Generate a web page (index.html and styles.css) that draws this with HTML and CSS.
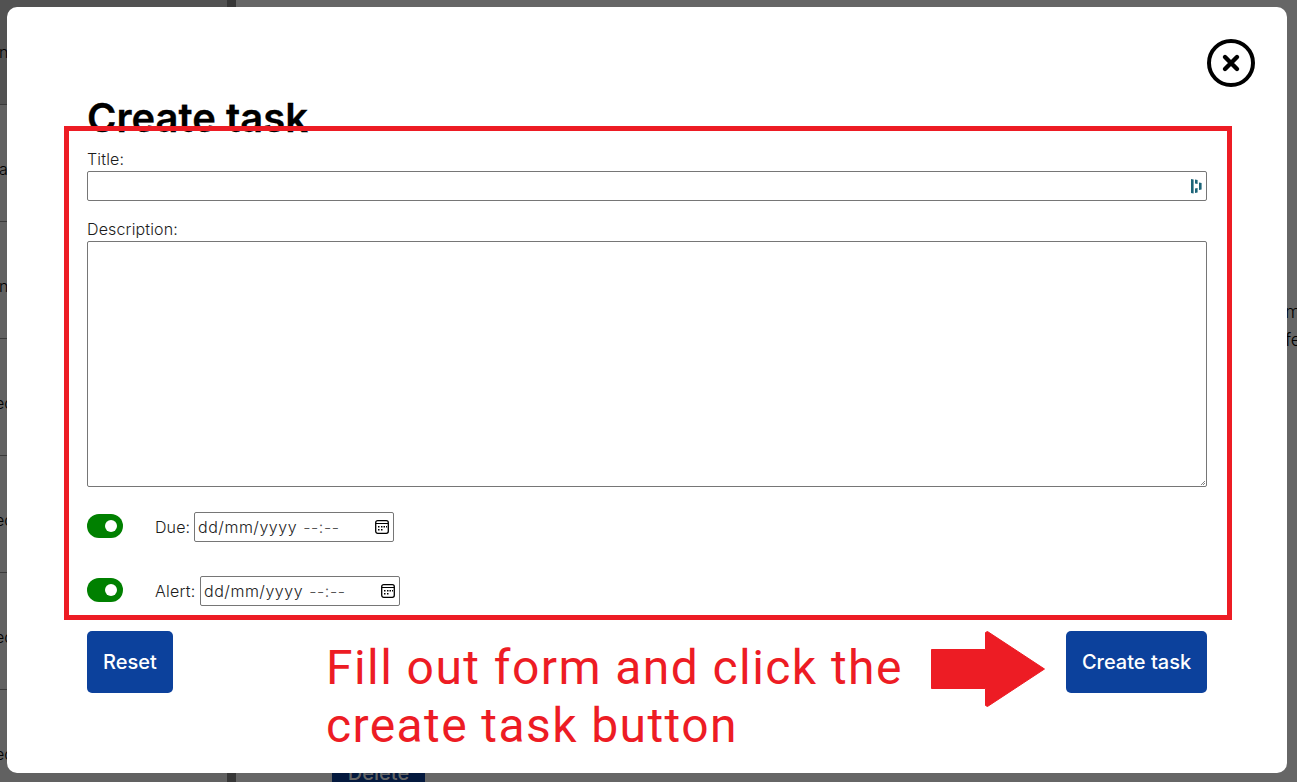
FILE: index.html
```html
<!DOCTYPE html>
<html lang="en">
<head>
<meta charset="utf-8">
<title>Create task</title>
<link rel="stylesheet" href="styles.css">
</head>
<body>
<div class="app">
  <div class="task-list">
    <div class="task selected"><span class="n">n</span></div>
    <div class="task"><span class="a">a</span></div>
    <div class="task"><span class="n">n</span></div>
    <div class="task"><span class="ed">ed</span></div>
    <div class="task"><span class="ed">ed</span></div>
    <div class="task"><span class="ed">ed</span></div>
    <div class="task"><span class="ed">ed</span></div>
  </div>
  <div class="detail">
    <div class="detail-text">m<br>fe</div>
    <div class="delete">Delete</div>
  </div>
</div>
<div class="modal">
  <div class="close-row">
    <svg class="close" width="48" height="48" viewBox="0 0 48 48" fill="none" stroke="#000"><circle cx="24" cy="24" r="22" stroke-width="4"/><path d="M18 18L30 30M30 18L18 30" stroke-width="4.4" stroke-linecap="round"/></svg>
  </div>
  <form class="form">
    <h1 class="heading">Create task</h1>
    <div class="label">Title:</div>
    <div class="box title-box">
      <svg width="12" height="16" viewBox="0 0 12 16" fill="#1c6478"><path d="M0 1l2.600.5v14L0 15zM4 1.500l2.600.5v4L4 5.500zM4 10.500l2.600-.5v4.500L4 15zM8 4.500l2.600.5v6.500L8 12z"/></svg>
    </div>
    <div class="label desc-label">Description:</div>
    <div class="box desc-box"><svg width="4" height="4" viewBox="0 0 4 4"><path d="M0 4L4 0M2 4L4 2" stroke="#666" stroke-width=".8"/></svg></div>
    <div class="date-row">
      <span class="toggle"><span class="knob"></span></span>
      <span class="date-label due">Due:</span>
      <span class="box date-box"><span class="date-text">dd/mm/yyyy</span><span class="time-text">--:--</span>
        <svg class="cal" width="14" height="14" viewBox="0 0 14 14"><rect x=".7" y=".7" width="12.600" height="12.600" rx="2" fill="none" stroke="#000" stroke-width="1.300"/><path d="M1 3.500h12" stroke="#000"/><path d="M6 6h1.500v1.500H6zM8.500 6H10v1.500H8.500zM11 6h1v1.500h-1zM3 6h1.500v1.500H3zM3 9h1.500v1.500H3zM6 9h1.500v1.500H6z"/></svg></span>
    </div>
    <div class="date-row">
      <span class="toggle"><span class="knob"></span></span>
      <span class="date-label alert">Alert:</span>
      <span class="box date-box"><span class="date-text">dd/mm/yyyy</span><span class="time-text">--:--</span>
        <svg class="cal" width="14" height="14" viewBox="0 0 14 14"><rect x=".7" y=".7" width="12.600" height="12.600" rx="2" fill="none" stroke="#000" stroke-width="1.300"/><path d="M1 3.500h12" stroke="#000"/><path d="M6 6h1.500v1.500H6zM8.500 6H10v1.500H8.500zM11 6h1v1.500h-1zM3 6h1.500v1.500H3zM3 9h1.500v1.500H3zM6 9h1.500v1.500H6z"/></svg></span>
    </div>
    <div class="actions">
      <button type="button" class="btn reset">Reset</button>
      <button type="button" class="btn create">Create task</button>
    </div>
  </form>
</div>
<div class="outline"></div>
<div class="note"><div class="line1">Fill out form and click the</div><div class="line2">create task button</div></div>
<svg class="arrow" width="116" height="78" viewBox="0 0 116 78"><path d="M1.500 20.500H55.500V3.500L57.500 2.500L114.500 40L57.500 77.500L55.500 76.500V59.500H1.500z" fill="#ed1c24" stroke="#ed1c24" stroke-linejoin="round"/></svg>
</body>
</html>
```
FILE: styles.css
```css
* { box-sizing: border-box; }
body { margin: 0; width: 1297px; height: 782px; overflow: hidden; position: relative; font-family: Inter, sans-serif; color: #000; }
.app { display: flex; width: 1297px; height: 782px; overflow: hidden; background: #666; }
.task-list { width: 236px; flex: none; border-right: 9px solid #373737; background: #616161; }
.task { height: 117px; border-bottom: 1px solid #3a3a3a; padding-top: 54px; font-size: 16px; line-height: 20px; font-weight: 300; overflow: hidden; }
.task.selected { height: 105px; padding-top: 42px; background: #525252; }
.task span { display: block; }
.n, .a { margin-left: -1px; }
.ed { margin-left: -5px; white-space: nowrap; }
.detail { flex: 1; display: flex; flex-direction: column; padding-top: 298px; }
.detail-text { flex: none; margin-left: 1049px; height: 463px; font-size: 18px; line-height: 28px; font-weight: 300; white-space: nowrap; }
.delete { margin-left: 96px; width: 93px; height: 50px; flex: none; background: #04193e; color: #666; font-size: 20px; font-weight: 500; line-height: 24px; text-align: center; }
.modal { position: absolute; left: 7px; top: 7px; width: 1280px; height: 766px; background: #fff; border-radius: 10px; padding: 32px 32px 0; }
.close-row { display: flex; justify-content: flex-end; height: 48px; }
.close { display: block; }
.form { margin: 0; padding: 5px 48px 0; }
.heading { margin: 0; height: 57px; font-size: 40px; line-height: 51px; font-weight: 600; -webkit-text-stroke: .3px #000; }
.label { height: 22px; font-size: 16px; line-height: 20px; font-weight: 300; letter-spacing: .15px; color: #1c1c1c; }
.box { display: flex; border: 1px solid #767676; border-radius: 2px; background: #fff; }
.title-box { height: 30px; align-items: center; justify-content: flex-end; padding-right: 3px; }
.desc-label { margin-top: 18px; }
.desc-box { height: 246px; margin: 0 0 25px; align-items: flex-end; justify-content: flex-end; padding: 1px; }
.date-row { display: flex; height: 30px; margin-bottom: 34px; }
.toggle { width: 36px; height: 24px; margin: 2px 32px 0 0; padding: 6px; display: flex; justify-content: flex-end; border-radius: 12px; background: green; }
.knob { width: 12px; height: 12px; border-radius: 50%; background: #fff; }
.date-label { font-size: 16px; font-weight: 300; line-height: 30px; letter-spacing: .1px; color: #1c1c1c; }
.due { width: 39px; }
.alert { width: 45px; letter-spacing: .25px; }
.date-box { width: 200px; height: 30px; align-items: center; padding: 0 4px 0 3px; font-size: 16px; font-weight: 300; color: #222; }
.date-text { letter-spacing: .52px; margin-right: 6px; }
.time-text { letter-spacing: .6px; color: #555; }
.cal { margin-left: auto; }
.actions { display: flex; justify-content: space-between; margin-top: -9px; }
.btn { height: 62px; border: 0; border-radius: 5px; padding: 0; background: #0c419c; color: #fff; font: 500 20px Inter, sans-serif; }
.reset { width: 86px; }
.create { width: 141px; }
.outline { position: absolute; left: 64px; top: 126px; width: 1168px; height: 494px; border: 5px solid #ed1c24; }
.note { position: absolute; left: 326px; top: 639px; color: #ed1c24; font: 400 48px/58px Roboto, sans-serif; white-space: nowrap; }
.line1 { letter-spacing: 1.43px; }
.line2 { letter-spacing: 1.4px; }
.arrow { position: absolute; left: 930px; top: 629px; }
```
